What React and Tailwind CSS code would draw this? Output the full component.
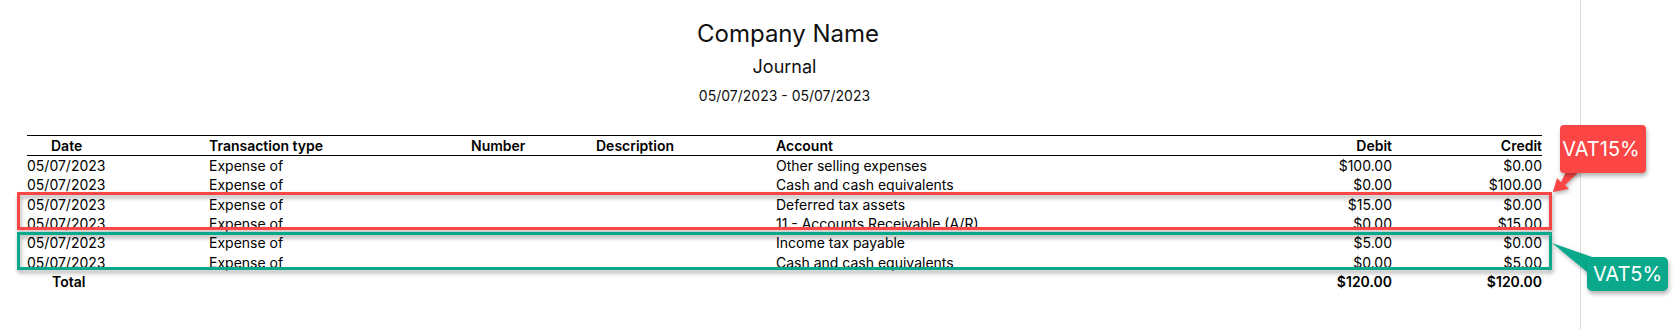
import React from "react";

const rows = [
  { date: "05/07/2023", type: "Expense of", account: "Other selling expenses", debit: "$100.00", credit: "$0.00" },
  { date: "05/07/2023", type: "Expense of", account: "Cash and cash equivalents", debit: "$0.00", credit: "$100.00" },
  { date: "05/07/2023", type: "Expense of", account: "Deferred tax assets", debit: "$15.00", credit: "$0.00" },
  { date: "05/07/2023", type: "Expense of", account: "11 - Accounts Receivable (A/R)", debit: "$0.00", credit: "$15.00" },
  { date: "05/07/2023", type: "Expense of", account: "Income tax payable", debit: "$5.00", credit: "$0.00" },
  { date: "05/07/2023", type: "Expense of", account: "Cash and cash equivalents", debit: "$0.00", credit: "$5.00" },
];

const cols = "grid grid-cols-[182px_262px_125px_180px_466px_150px_150px]";

const App = () => {
  return (
    <div className="relative flex h-[330px] w-[1674px] overflow-hidden bg-white font-['Inter',sans-serif] text-black">
      {/* report page */}
      <div className="h-full w-[1581px] border-r border-[#dcdcdc] pl-[27px] pt-[18px]">
        <div className="flex w-[1515px] flex-col items-center">
          <h1 className="ml-[7px] text-[24px] leading-8 text-[#111]">Company Name</h1>
          <h2 className="mt-[3px] text-[18px] leading-7 text-[#111]">Journal</h2>
          <p className="mt-[5px] text-[14px] leading-5 text-[#111]">05/07/2023 - 05/07/2023</p>
        </div>

        <div className="mt-[29px] w-[1515px] text-[14px]">
          <div className={`${cols} border-y border-black font-semibold leading-[19px]`}>
            <div className="pl-[24px]">Date</div>
            <div>Transaction type</div>
            <div>Number</div>
            <div>Description</div>
            <div>Account</div>
            <div className="text-right">Debit</div>
            <div className="text-right">Credit</div>
          </div>
          {rows.map((r, i) => (
            <div key={i} className={`${cols} leading-[19.33px]`}>
              <div>{r.date}</div>
              <div>{r.type}</div>
              <div></div>
              <div></div>
              <div>{r.account}</div>
              <div className="text-right">{r.debit}</div>
              <div className="text-right">{r.credit}</div>
            </div>
          ))}
          <div className={`${cols} font-semibold leading-[19.33px]`}>
            <div className="pl-[25px]">Total</div>
            <div></div>
            <div></div>
            <div></div>
            <div></div>
            <div className="text-right">$120.00</div>
            <div className="text-right">$120.00</div>
          </div>
        </div>
      </div>

      {/* annotation boxes */}
      <div className="pointer-events-none absolute left-[17px] top-[192px] h-[38px] w-[1535px] border-[3px] border-[#fc4646] drop-shadow-[1px_3px_2px_rgba(0,0,0,0.35)]" />
      <div className="pointer-events-none absolute left-[17px] top-[232px] h-[38px] w-[1535px] border-[3px] border-[#0aa98b] drop-shadow-[1px_3px_2px_rgba(0,0,0,0.35)]" />

      {/* callout tails */}
      <svg className="pointer-events-none absolute left-0 top-0 drop-shadow-[1px_2px_2px_rgba(0,0,0,0.3)]" width="1674" height="330">
        <polygon points="1567,170 1581,170 1565,185 1569,189 1553,192 1557,178 1561,182" fill="#fc4646" />
        <polygon points="1552,243 1592,257 1592,276" fill="#0aa98b" />
      </svg>

      {/* labels */}
      <div className="absolute left-[1560px] top-[125px] flex h-[48px] w-[86px] items-center justify-center rounded-[4px] bg-[#fc4646] pr-[4px] text-[20px] text-white shadow-[1px_3px_4px_rgba(0,0,0,0.3)]">
        VAT15%
      </div>
      <div className="absolute left-[1587px] top-[257px] flex h-[34px] w-[81px] items-center justify-center rounded-[5px] bg-[#0aa98b] text-[20px] text-white shadow-[1px_3px_4px_rgba(0,0,0,0.3)]">
        VAT5%
      </div>
    </div>
  );
};

export default App;
